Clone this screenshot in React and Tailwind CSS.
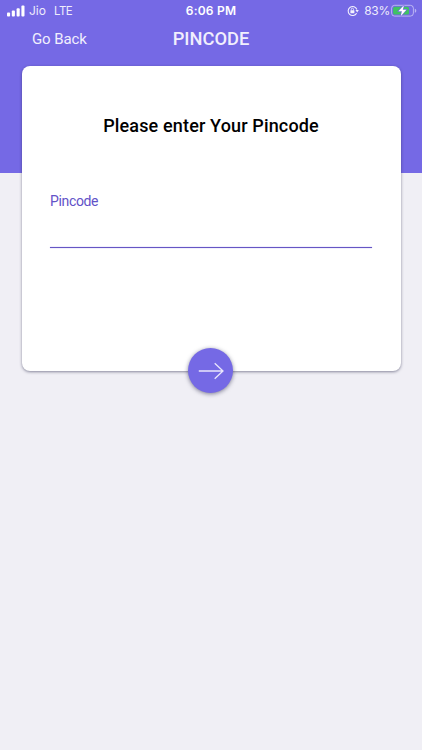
import React from 'react';

function SignalBars() {
  return (
    <svg width="18" height="12" viewBox="0 0 18 12" fill="#fff" aria-hidden="true">
      <rect x="0" y="7.6" width="3.1" height="3.8" rx="0.9" />
      <rect x="4.8" y="5.6" width="3.1" height="5.8" rx="0.9" />
      <rect x="9.6" y="3.3" width="3.1" height="8.1" rx="0.9" />
      <rect x="14.4" y="0.5" width="3.1" height="10.9" rx="0.9" />
    </svg>
  );
}

function RotationLock() {
  return (
    <svg width="12" height="12" viewBox="0 0 12 12" fill="none" stroke="#f4f2fd" aria-hidden="true">
      <path d="M9.6 8.2A4.5 4.5 0 1 1 9.9 4.5" strokeWidth="1.1" />
      <path d="M8.5 5.1h3.3L10.2 7.4z" fill="#f4f2fd" stroke="none" />
      <rect x="3.4" y="5.2" width="4" height="3.1" rx="0.5" fill="#f4f2fd" stroke="none" />
      <path d="M4.3 5.4V4.3a1.1 1.1 0 0 1 2.2 0v1.1" strokeWidth="0.8" />
    </svg>
  );
}

function Battery() {
  return (
    <svg width="26" height="14" viewBox="0 0 26 14" aria-hidden="true">
      <rect x="0.6" y="1.3" width="21.8" height="10.8" rx="3" fill="none" stroke="#fff" strokeOpacity="0.5" strokeWidth="1" />
      <path d="M23.8 4.8v4c1-.4 1.5-1.1 1.5-2s-.5-1.6-1.5-2z" fill="#fff" fillOpacity="0.5" />
      <rect x="2.1" y="2.8" width="15.9" height="7.8" rx="1.6" fill="#3fc263" />
      <path d="M12.9 1.3 7.4 7.2h3.5L9.7 12.2 15.4 5.7h-3.6z" fill="#fff" stroke="#7569e5" strokeWidth="1.2" paintOrder="stroke" />
    </svg>
  );
}

function ArrowRight() {
  return (
    <svg width="26" height="18" viewBox="0 0 26 18" fill="none" stroke="#e9e6fc" strokeWidth="1.3" aria-hidden="true">
      <path d="M0.8 9H25M16.7 1.2 25 9l-8.3 7.8" />
    </svg>
  );
}

export default function App() {
  return (
    <div className="h-[750px] w-[422px] overflow-hidden bg-[#f0eff5] font-['Roboto',sans-serif]">
      <header className="h-[173px] bg-[#7569e5] text-white">
        <div className="grid h-[22px] grid-cols-[1fr_auto_1fr] items-center pl-[7px] pr-[5px] font-['Inter',sans-serif] text-[12px] leading-[22px]">
          <div className="flex items-center text-[#eeecfc]">
            <SignalBars />
            <span className="ml-1 w-[25px]">Jio</span>
            <span className="text-[11.5px] tracking-[-0.5px]">LTE</span>
          </div>
          <span className="mr-[2px] text-[12px] font-semibold tracking-[0.2px]">6:06 PM</span>
          <div className="flex items-center justify-end text-[#eeecfc]">
            <RotationLock />
            <span className="ml-[5px] mr-[1px] text-[12px] tracking-[-0.25px]">83%</span>
            <Battery />
          </div>
        </div>
        <nav className="grid h-[33px] grid-cols-[1fr_auto_1fr] items-center pl-8 pr-8">
          <button className="justify-self-start pt-px text-[15px] leading-[33px] tracking-[-0.1px] text-[#f1effd]">Go Back</button>
          <h1 className="text-[18.3px] font-medium leading-[32px] text-[#f1effd]">PINCODE</h1>
        </nav>
      </header>
      <main className="ml-[21.5px] -mt-[107.5px] flex h-[305.5px] w-[379px] flex-col rounded-[8px] bg-white px-[28.5px] shadow-[0_1px_3px_rgba(30,30,65,0.5)]">
        <h2 className="mt-[48px] text-center text-[18px] font-medium leading-6 tracking-[0.15px] text-black">Please enter Your Pincode</h2>
        <label className="mt-[53.5px] flex h-[57px] flex-col text-[14px] leading-5 tracking-[-0.35px] text-[#6252c8]">
          Pincode
          <input aria-label="Pincode" className="w-full flex-1 bg-transparent outline-none" />
          <span className="h-px w-full bg-[#6656c4] shadow-[0_0_1px_#7569e5]" />
        </label>
        <button aria-label="Continue" className="mt-auto -mb-[22px] mr-px flex h-[45px] w-[45px] shrink-0 items-center justify-center self-center rounded-full bg-[#7569e5] shadow-[0_1px_4px_rgba(30,30,65,0.55)]">
          <ArrowRight />
        </button>
      </main>
    </div>
  );
}
